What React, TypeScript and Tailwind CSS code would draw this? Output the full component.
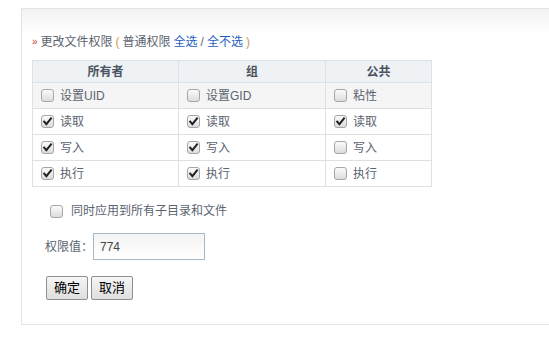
import React from "react";

const CJK = "font-['Liberation_Sans','Noto_Sans_CJK_SC',sans-serif]";

function Box({ checked }: { checked?: boolean }) {
  return (
    <span className="relative inline-block w-[13px] h-[13px] shrink-0 rounded-[3px] border border-[#a6a6a6] bg-gradient-to-b from-[#fbfbfb] to-[#dcdcdc]">
      {checked && (
        <svg viewBox="0 0 13 13" className="absolute -left-px -top-px w-[13px] h-[13px]">
          <path d="M3.2 6.6 L5.4 9.2 L10 3.4" fill="none" stroke="#222" strokeWidth="2" strokeLinecap="square" />
        </svg>
      )}
    </span>
  );
}

function Cell({ label, checked }: { label: string; checked?: boolean }) {
  return (
    <td className="border border-[#dde1e5] pl-[8px] h-[26px]">
      <div className="flex items-center gap-[6px]">
        <Box checked={checked} />
        <span>{label}</span>
      </div>
    </td>
  );
}

const ROWS: [string, boolean, string, boolean, string, boolean][] = [
  ["读取", true, "读取", true, "读取", true],
  ["写入", true, "写入", true, "写入", false],
  ["执行", true, "执行", true, "执行", false],
];

export default function App() {
  return (
    <div className={`w-[549px] h-[337px] bg-white overflow-hidden text-[12px] text-[#5b6470] ${CJK}`}>
      <div className="ml-[21px] mt-[8px] w-[560px] h-[317px] border-l border-t border-b border-[#e4e4e4] bg-gradient-to-b from-[#f2f2f2] via-white via-[25px] to-white">
        <div className="pl-[10px] pt-[24px] leading-[18px] flex items-center">
          <span className="text-[#c0392b] text-[10px] mr-[3px]">»</span>
          <span>更改文件权限</span>
          <span className="text-[#d39a4a] mx-[3px]">(</span>
          <span>普通权限</span>
          <span className="text-[#1f5fbf] ml-[3px]">全选</span>
          <span className="mx-[3px]">/</span>
          <span className="text-[#1f5fbf]">全不选</span>
          <span className="text-[#d39a4a] ml-[3px]">)</span>
        </div>
        <table className="ml-[10px] mt-[9px] border-collapse w-[400px]">
          <thead>
            <tr className="bg-[#eef2f5] h-[22px] text-[#4a5460] font-bold">
              <th className="border border-[#dde1e5] w-[146px] font-bold">所有者</th>
              <th className="border border-[#dde1e5] w-[147px] font-bold">组</th>
              <th className="border border-[#dde1e5] font-bold">公共</th>
            </tr>
          </thead>
          <tbody>
            <tr className="bg-[#f5f5f5]">
              <Cell label="设置UID" />
              <Cell label="设置GID" />
              <Cell label="粘性" />
            </tr>
            {ROWS.map((r, i) => (
              <tr key={i}>
                <Cell label={r[0]} checked={r[1]} />
                <Cell label={r[2]} checked={r[3]} />
                <Cell label={r[4]} checked={r[5]} />
              </tr>
            ))}
          </tbody>
        </table>
        <div className="ml-[28px] mt-[15px] flex items-center gap-[8px] leading-[18px]">
          <Box />
          <span>同时应用到所有子目录和文件</span>
        </div>
        <div className="ml-[23px] mt-[13px] flex items-center">
          <span>权限值：</span>
          <input
            defaultValue="774"
            className="w-[112px] h-[27px] border border-[#a9b8c8] px-[6px] text-[12px] text-[#444] outline-none bg-gradient-to-b from-[#f4f4f4] to-white"
          />
        </div>
        <div className="ml-[24px] mt-[16px] flex gap-[3px]">
          <button className="w-[42px] h-[24px] border border-[#8f8f8f] rounded-[2px] bg-gradient-to-b from-[#f6f6f6] to-[#dedede] text-black text-[13px]">确定</button>
          <button className="w-[42px] h-[24px] border border-[#8f8f8f] rounded-[2px] bg-gradient-to-b from-[#f6f6f6] to-[#dedede] text-black text-[13px]">取消</button>
        </div>
      </div>
    </div>
  );
}
